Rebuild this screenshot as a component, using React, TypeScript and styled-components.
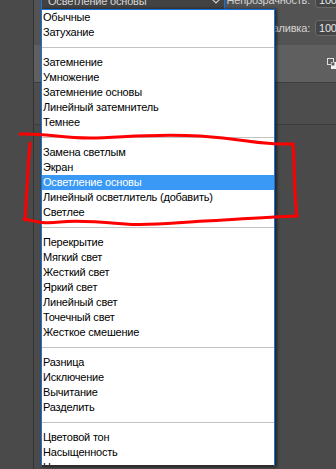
import React from "react";
import styled, { createGlobalStyle } from "styled-components";

const GlobalStyle = createGlobalStyle`
  html, body {
    margin: 0;
    padding: 0;
    background: #535353;
    overflow: hidden;
  }
  * { box-sizing: border-box; }
`;

const Page = styled.div`
  position: relative;
  width: 336px;
  height: 469px;
  display: flex;
  overflow: hidden;
  font-family: "Liberation Sans", Arial, sans-serif;
  font-size: 11px;
  letter-spacing: -0.2px;
`;

const LeftDock = styled.div`
  width: 34px;
  flex: none;
  background: #4a4a4a;
  border-right: 1px solid #333333;
`;

const Workspace = styled.div`
  flex: 1;
  display: flex;
  flex-direction: column;
  background: #535353;
`;

const OptionsArea = styled.div`
  height: 45px;
  flex: none;
  display: flex;
  flex-direction: column;
  justify-content: flex-end;
  gap: 12px;
  padding-bottom: 9px;
  overflow: hidden;
`;

const OptionRow = styled.div`
  height: 16px;
  flex: none;
  display: flex;
  align-items: center;
  justify-content: flex-end;
  gap: 5px;
`;

const OptionLabel = styled.span`
  color: #d2d2d2;
  white-space: nowrap;
`;

const ValueBox = styled.div`
  width: 42px;
  height: 16px;
  margin-right: -21px;
  border: 1px solid #6a6a6a;
  border-radius: 3px;
  background: #454545;
  color: #e6e6e6;
  padding-left: 3px;
  line-height: 14px;
`;

const LayersStrip = styled.div`
  height: 38px;
  flex: none;
  background: #5f5f5f;
  border-bottom: 1px solid #3d3d3d;
  display: flex;
  align-items: center;
  justify-content: flex-end;
`;

const LayersBody = styled.div`
  height: 42px;
  flex: none;
  background: #4d4d4d;
  border-bottom: 1px solid #3e3e3e;
`;

const LayersRest = styled.div`
  flex: 1;
  background: #4a4a4a;
`;

const Dropdown = styled.div`
  position: absolute;
  left: 41px;
  top: 0;
  width: 234px;
  display: flex;
  flex-direction: column;
  align-items: flex-start;
  z-index: 2;
`;

const SelectField = styled.div`
  width: 184px;
  height: 9px;
  display: flex;
  flex-direction: column;
  justify-content: flex-end;
  overflow: hidden;
  background: #424242;
  border-left: 1px solid #1473e6;
  border-right: 1px solid #1473e6;
`;

const SelectInner = styled.div`
  height: 17px;
  flex: none;
  display: flex;
  align-items: center;
  justify-content: space-between;
  padding: 0 3px 0 6px;
  color: #d6d6d6;
`;

const List = styled.div`
  width: 234px;
  height: 458px;
  overflow: hidden;
  background: #ffffff;
  border: 1px solid #1473e6;
  border-bottom: 2px solid #2e2e2e;
  box-shadow: 2px 0 3px rgba(0, 0, 0, 0.55);
`;

const Item = styled.div<{ $active?: boolean }>`
  height: 15px;
  line-height: 15px;
  padding-left: 1px;
  white-space: nowrap;
  color: ${(p) => (p.$active ? "#ffffff" : "#000000")};
  background: ${(p) => (p.$active ? "#3b99f6" : "transparent")};
`;

const Separator = styled.div`
  height: 15px;
  position: relative;
  &::after {
    content: "";
    position: absolute;
    left: 0;
    right: 0;
    top: 7px;
    height: 1px;
    background: #c3c3c3;
  }
`;

const Annotation = styled.svg`
  position: absolute;
  left: 0;
  top: 0;
  pointer-events: none;
  z-index: 3;
`;

const groups: string[][] = [
  ["Обычные", "Затухание"],
  ["Затемнение", "Умножение", "Затемнение основы", "Линейный затемнитель", "Темнее"],
  ["Замена светлым", "Экран", "Осветление основы", "Линейный осветлитель (добавить)", "Светлее"],
  ["Перекрытие", "Мягкий свет", "Жесткий свет", "Яркий свет", "Линейный свет", "Точечный свет", "Жесткое смешение"],
  ["Разница", "Исключение", "Вычитание", "Разделить"],
  ["Цветовой тон", "Насыщенность", "Цветность", "Яркость"],
];

const ACTIVE = "Осветление основы";

export default function App() {
  return (
    <>
      <GlobalStyle />
      <Page>
        <LeftDock />
        <Workspace>
          <OptionsArea>
            <OptionRow>
              <OptionLabel>Непрозрачность:</OptionLabel>
              <ValueBox>100%</ValueBox>
            </OptionRow>
            <OptionRow>
              <OptionLabel>Заливка:</OptionLabel>
              <ValueBox>100%</ValueBox>
            </OptionRow>
          </OptionsArea>
          <LayersStrip>
            <svg width="12" height="12" viewBox="0 0 12 12" style={{ marginRight: -3 }}>
              <rect x="0.5" y="0.5" width="6" height="6" fill="none" stroke="#e0e0e0" />
              <rect x="4" y="4" width="7" height="7" fill="#f2f2f2" />
              <rect x="4.5" y="4.5" width="3" height="3" fill="#5f5f5f" />
            </svg>
          </LayersStrip>
          <LayersBody />
          <LayersRest />
        </Workspace>

        <Dropdown>
          <SelectField>
            <SelectInner>
              <span>Осветление основы</span>
              <svg width="10" height="6" viewBox="0 0 10 6">
                <path d="M1 1 L5 5 L9 1" fill="none" stroke="#cfcfcf" strokeWidth="1.2" />
              </svg>
            </SelectInner>
          </SelectField>
          <List>
            {groups.map((g, gi) => (
              <React.Fragment key={gi}>
                {gi > 0 && <Separator />}
                {g.map((name) => (
                  <Item key={name} $active={name === ACTIVE}>
                    {name}
                  </Item>
                ))}
              </React.Fragment>
            ))}
          </List>
        </Dropdown>

        <Annotation width="336" height="469" viewBox="0 0 336 469">
          <g fill="none" stroke="#ff0000" strokeWidth="3" strokeLinecap="round" strokeLinejoin="round">
            <path d="M20 134 C45 133 60 138 90 138 S150 133 200 136 S255 145 293 144" />
            <path d="M293 144 C295 170 294 195 297 216" />
            <path d="M297 216 C270 217 240 219 205 221 S150 226 125 224 S80 220 60 222 S35 221 24 219" />
            <path d="M25 220 C27 190 28 165 30 143" />
          </g>
        </Annotation>
      </Page>
    </>
  );
}
